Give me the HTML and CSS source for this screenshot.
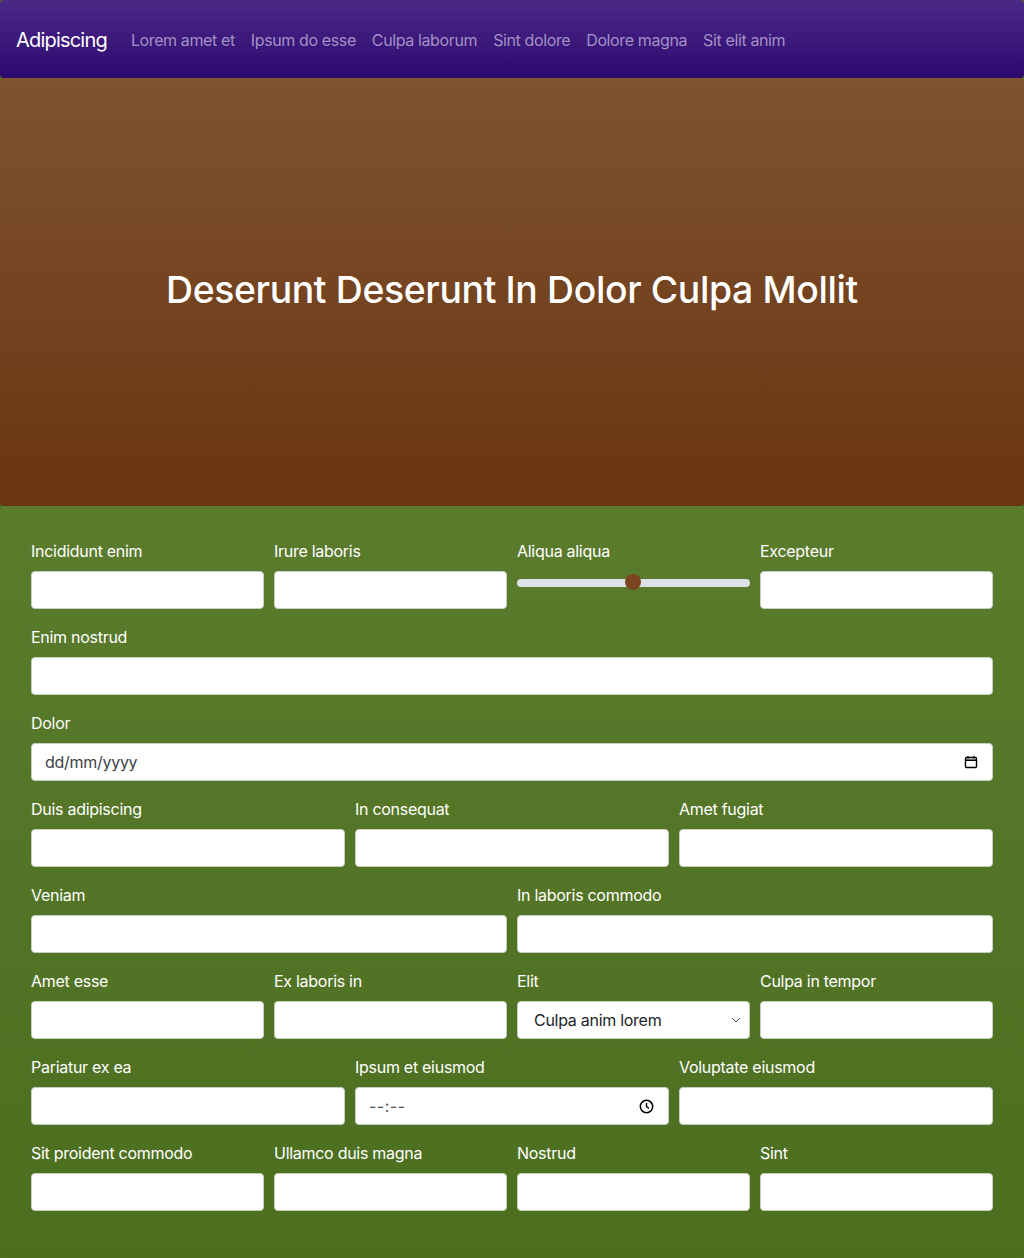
FILE: index.html
```html
<!DOCTYPE html>
<html lang="en">
<head>
<meta charset="utf-8">
<title>Adipiscing</title>
<link rel="stylesheet" href="styles.css">
</head>
<body>
<nav class="navbar">
  <a class="brand" href="#">Adipiscing</a>
  <ul class="nav">
    <li><a href="#">Lorem amet et</a></li>
    <li><a href="#">Ipsum do esse</a></li>
    <li><a href="#">Culpa laborum</a></li>
    <li><a href="#">Sint dolore</a></li>
    <li><a href="#">Dolore magna</a></li>
    <li><a href="#">Sit elit anim</a></li>
  </ul>
</nav>
<header class="hero">
  <h1>Deserunt Deserunt In Dolor Culpa Mollit</h1>
</header>
<form class="form">
  <div class="field s3"><label>Incididunt enim</label><input class="control" type="text"></div>
  <div class="field s3"><label>Irure laboris</label><input class="control" type="text"></div>
  <div class="field s3"><label>Aliqua aliqua</label><div class="range"><div class="track"></div><div class="thumb"></div></div></div>
  <div class="field s3"><label>Excepteur</label><input class="control" type="text"></div>

  <div class="field s12"><label>Enim nostrud</label><input class="control" type="text"></div>

  <div class="field s12"><label>Dolor</label>
    <div class="control fake"><span class="ph">dd/mm/yyyy</span>
      <svg class="ico" width="14" height="14" viewBox="0 0 14 14"><rect x="1.5" y="2.5" width="11" height="10" rx="1.2" fill="none" stroke="#000" stroke-width="1.4"/><path d="M1.5 5.2h11" stroke="#000" stroke-width="1.6"/><path d="M4 1v2.5M10 1v2.5" stroke="#000" stroke-width="1.3"/></svg>
    </div>
  </div>

  <div class="field s4"><label>Duis adipiscing</label><input class="control" type="text"></div>
  <div class="field s4"><label>In consequat</label><input class="control" type="text"></div>
  <div class="field s4"><label>Amet fugiat</label><input class="control" type="text"></div>

  <div class="field s6"><label>Veniam</label><input class="control" type="text"></div>
  <div class="field s6"><label>In laboris commodo</label><input class="control" type="text"></div>

  <div class="field s3"><label>Amet esse</label><input class="control" type="text"></div>
  <div class="field s3"><label>Ex laboris in</label><input class="control" type="text"></div>
  <div class="field s3"><label>Elit</label>
    <div class="select-wrap">
      <select class="control select"><option>Culpa anim lorem</option></select>
      <svg class="chev" width="10" height="6" viewBox="0 0 10 6"><path d="M1 1l4 4 4-4" fill="none" stroke="#444" stroke-width="1"/></svg>
    </div>
  </div>
  <div class="field s3"><label>Culpa in tempor</label><input class="control" type="text"></div>

  <div class="field s4"><label>Pariatur ex ea</label><input class="control" type="text"></div>
  <div class="field s4"><label>Ipsum et eiusmod</label>
    <div class="control fake"><span class="ph time">--:--</span>
      <svg class="ico" width="15" height="15" viewBox="0 0 15 15"><circle cx="7.5" cy="7.5" r="6.2" fill="none" stroke="#000" stroke-width="1.5"/><path d="M7.5 4v3.7l2.4 1.6" fill="none" stroke="#000" stroke-width="1.4"/></svg>
    </div>
  </div>
  <div class="field s4"><label>Voluptate eiusmod</label><input class="control" type="text"></div>

  <div class="field s3"><label>Sit proident commodo</label><input class="control" type="text"></div>
  <div class="field s3"><label>Ullamco duis magna</label><input class="control" type="text"></div>
  <div class="field s3"><label>Nostrud</label><input class="control" type="text"></div>
  <div class="field s3"><label>Sint</label><input class="control" type="text"></div>
</form>
</body>
</html>
```

FILE: styles.css
```css
* { box-sizing: border-box; }
html { background: #2a2a2a; }
body {
  margin: 0;
  font-family: Inter, "Liberation Sans", Arial, sans-serif;
  font-size: 16px;
  line-height: 24px;
  letter-spacing: -0.28px;
  background: #4f7021;
  color: #fff;
}
.navbar {
  display: flex;
  align-items: center;
  height: 78px;
  padding: 2px 16px 0;
  background: linear-gradient(to bottom, #4b2986, #2d0970);
  border-radius: 4px;
}
.brand {
  font-size: 20px;
  line-height: 30px;
  letter-spacing: -0.8px;
  color: #fff;
  text-decoration: none;
  margin-right: 16px;
}
.nav {
  display: flex;
  list-style: none;
  margin: 0;
  padding: 0;
}
.nav a {
  display: block;
  padding: 8px;
  letter-spacing: -0.38px;
  color: #a391c6;
  text-decoration: none;
}
.hero {
  height: 428px;
  display: flex;
  align-items: center;
  justify-content: center;
  padding-bottom: 3px;
  background: linear-gradient(to bottom, #7f532f, #6a3511);
  border-radius: 4px;
}
.hero h1 {
  margin: 0;
  font-size: 37.4px;
  line-height: 1.2;
  font-weight: 500;
  letter-spacing: -0.38px;
  color: #fff;
}
.form {
  display: grid;
  grid-template-columns: repeat(12, 1fr);
  column-gap: 10px;
  padding: 33px 31px 31px;
  background: linear-gradient(to bottom, #5b7b2d, #4c6e1f);
  border-radius: 4px;
  min-height: 752px;
  align-content: start;
}
.field { margin-bottom: 16px; min-width: 0; }
.s3 { grid-column: span 3; }
.s4 { grid-column: span 4; }
.s6 { grid-column: span 6; }
.s12 { grid-column: span 12; }
label {
  display: block;
  margin-bottom: 8px;
  font-size: 16px;
  line-height: 24px;
}
.control {
  display: block;
  width: 100%;
  height: 38px;
  padding: 6px 12px;
  font: inherit;
  letter-spacing: inherit;
  color: #212529;
  background: #fff;
  border: 1px solid #c8cfc0;
  border-radius: 4px;
  outline: none;
}
.fake {
  position: relative;
  display: flex;
  align-items: center;
  justify-content: space-between;
  padding: 0 14px 0 13px;
}
.ph { color: #3d4247; }
.ph.time { color: #555; letter-spacing: 0.5px; }
.select-wrap { position: relative; }
.select {
  appearance: none;
  -webkit-appearance: none;
  padding-left: 16px;
}
.chev {
  position: absolute;
  right: 9px;
  top: 16px;
  pointer-events: none;
}
.range {
  position: relative;
  height: 38px;
  display: flex;
  align-items: center;
}
.track {
  width: 100%;
  height: 8px;
  border-radius: 4px;
  background: #dee2e6;
  margin-top: -14px;
}
.thumb {
  position: absolute;
  left: 108px;
  top: 3px;
  width: 16px;
  height: 16px;
  border-radius: 50%;
  background: #7b4520;
}
```
